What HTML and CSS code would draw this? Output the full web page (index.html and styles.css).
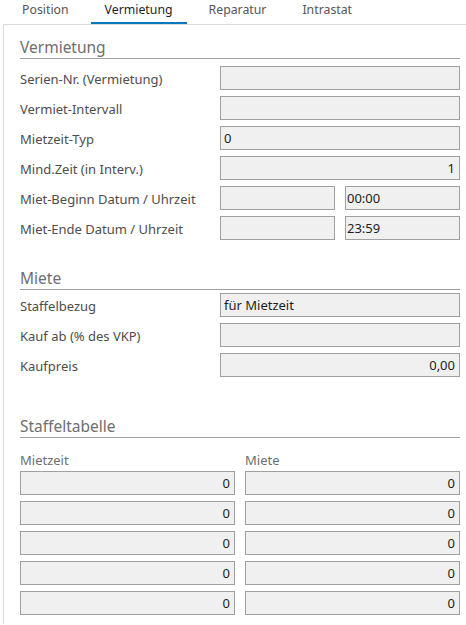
FILE: index.html
```html
<!DOCTYPE html>
<html lang="de">
<head>
<meta charset="utf-8">
<title>Vermietung</title>
<link rel="stylesheet" href="styles.css">
</head>
<body>
<div class="tabs">
  <div class="tab">Position</div>
  <div class="tab active">Vermietung</div>
  <div class="tab">Reparatur</div>
  <div class="tab">Intrastat</div>
</div>
<div class="panel">
  <div class="heading h1">Vermietung</div>
  <div class="rows r1">
    <div class="row"><div class="label">Serien-Nr. (Vermietung)</div><div class="field"></div></div>
    <div class="row"><div class="label">Vermiet-Intervall</div><div class="field"></div></div>
    <div class="row"><div class="label">Mietzeit-Typ</div><div class="field">0</div></div>
    <div class="row"><div class="label">Mind.Zeit (in Interv.)</div><div class="field num">1</div></div>
    <div class="row"><div class="label">Miet-Beginn Datum / Uhrzeit</div><div class="pair"><div class="field"></div><div class="field time">00:00</div></div></div>
    <div class="row"><div class="label">Miet-Ende Datum / Uhrzeit</div><div class="pair"><div class="field"></div><div class="field time">23:59</div></div></div>
  </div>

  <div class="heading h2">Miete</div>
  <div class="rows r2">
    <div class="row"><div class="label">Staffelbezug</div><div class="field">für Mietzeit</div></div>
    <div class="row"><div class="label">Kauf ab (% des VKP)</div><div class="field"></div></div>
    <div class="row"><div class="label">Kaufpreis</div><div class="field num">0,00</div></div>
  </div>

  <div class="heading h3">Staffeltabelle</div>
  <div class="table">
    <div class="col-label">Mietzeit</div>
    <div class="col-label">Miete</div>
    <div class="field num">0</div><div class="field num">0</div>
    <div class="field num">0</div><div class="field num">0</div>
    <div class="field num">0</div><div class="field num">0</div>
    <div class="field num">0</div><div class="field num">0</div>
    <div class="field num">0</div><div class="field num">0</div>
  </div>
</div>
</body>
</html>
```
FILE: styles.css
```css
* { box-sizing: border-box; }
html, body { margin: 0; padding: 0; background: #ffffff; }
body {
  font-family: "Noto Sans", "Open Sans", sans-serif;
  font-size: 13px;
  color: #555555;
  width: 466px;
  height: 625px;
  overflow: hidden;
}
.tabs {
  display: flex;
  height: 24px;
  padding-left: 8px;
  gap: 8px;
}
.tab {
  padding: 0 14px 2px;
  font-size: 12.3px;
  line-height: 20px;
  height: 24px;
  border-bottom: 2px solid transparent;
  color: #555555;
}
.tab.active {
  color: #1f1f1f;
  border-bottom-color: #0a78be;
}
.panel {
  margin-left: 3px;
  height: 600px;
  border-left: 1px solid #dadada;
  border-top: 1px solid #dadada;
  padding: 0 6px 0 16px;
}
.heading {
  font-size: 15.5px;
  line-height: 22px;
  color: #6e6e6e;
  border-bottom: 1px solid #a0a0a0;
}
.h1 { margin-top: 11px; }
.h2 { margin-top: 27px; }
.h3 { margin-top: 38px; }
.rows {
  display: flex;
  flex-direction: column;
  gap: 6px;
}
.r1 { margin-top: 7px; }
.r2 { margin-top: 3px; }
.row {
  display: grid;
  grid-template-columns: 200px 1fr;
  height: 24px;
}
.label {
  line-height: 24px;
  padding-top: 1px;
  color: #4d4d4d;
  white-space: nowrap;
}
.pair {
  display: grid;
  grid-template-columns: 1fr 1fr;
  gap: 10px;
}
.field {
  height: 24px;
  border: 1px solid #a0a0a0;
  background: #f0f0f0;
  line-height: 22px;
  padding: 0 4px 0 3px;
  color: #1e1e1e;
  white-space: nowrap;
}
.field.time { padding-left: 1px; }
.field.num { text-align: right; }
.table {
  margin-top: 13px;
  display: grid;
  grid-template-columns: 1fr 1fr;
  column-gap: 10px;
  row-gap: 6px;
}
.col-label {
  line-height: 18px;
  color: #6e6e6e;
  margin-bottom: -4px;
}
```
